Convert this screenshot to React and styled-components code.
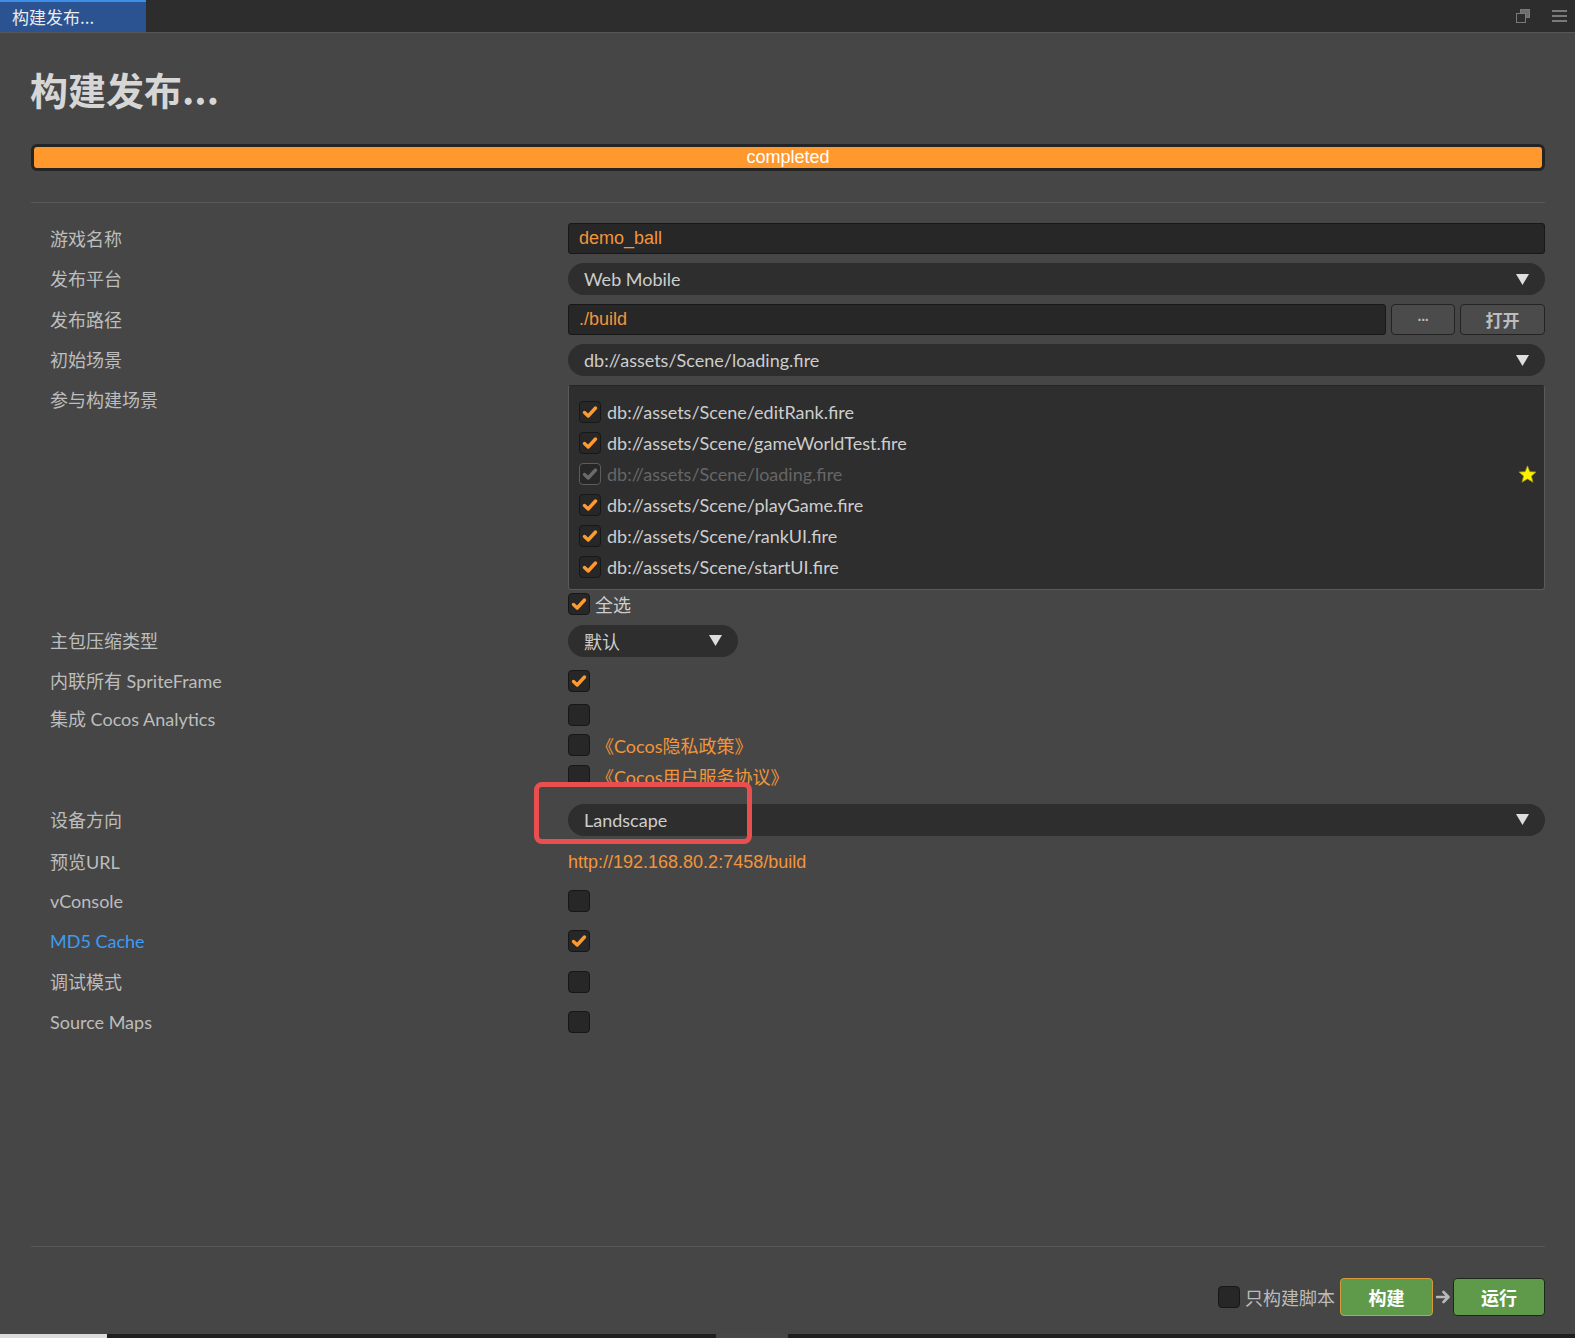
import React from 'react'
import styled, { createGlobalStyle } from 'styled-components'

const colors = {
  page: '#464646',
  tabBar: '#2d2d2d',
  tab: '#2b5291',
  tabLine: '#3c8ee8',
  line: '#595959',
  label: '#bdbdbd',
  value: '#cdcdcd',
  orange: '#f2953a',
  field: '#272727',
  pill: '#2e2e2e',
  blue: '#3d9cf2',
  green: '#5f9a4b',
}

const GlobalStyle = createGlobalStyle`
  html, body {
    margin: 0;
    padding: 0;
    background: ${colors.page};
  }
  body {
    font-family: Lato, "Noto Sans CJK SC", sans-serif;
  }
`

const Window = styled.div`
  position: relative;
  width: 1575px;
  height: 1338px;
  display: flex;
  flex-direction: column;
  overflow: hidden;
  background: ${colors.page};
`

const TabBar = styled.div`
  height: 32px;
  flex-shrink: 0;
  display: flex;
  justify-content: space-between;
  background: ${colors.tabBar};
  border-bottom: 1px solid #575757;
`

const Tab = styled.div`
  width: 146px;
  box-sizing: border-box;
  padding-left: 12px;
  background: ${colors.tab};
  border-top: 2px solid ${colors.tabLine};
  color: #ececec;
  font-family: "Noto Sans CJK SC", sans-serif;
  font-size: 17px;
  line-height: 29px;
`

const TabTools = styled.div`
  display: flex;
  align-items: center;
  gap: 22px;
  padding-right: 8px;
`

const Main = styled.div`
  flex: 1;
  display: flex;
  flex-direction: column;
  padding: 0 30px 0 31px;
`

const Title = styled.h1`
  margin: 34px 0 0 -1px;
  font-family: "Noto Sans CJK SC", sans-serif;
  font-size: 38px;
  font-weight: 700;
  line-height: 44px;
  color: #d6d6d6;
`

const Progress = styled.div`
  margin-top: 33px;
  height: 27px;
  box-sizing: border-box;
  border: 3px solid #242424;
  border-radius: 6px;
  background: #ff982d;
  color: #ffffff;
  font-family: "Liberation Sans", Arial, sans-serif;
  font-size: 18px;
  line-height: 21px;
  text-align: center;
`

const Divider = styled.div`
  height: 1px;
  background: ${colors.line};
  margin-top: ${({ $mt }) => $mt || 0}px;
`

const Form = styled.div`
  margin-top: 15px;
  display: flex;
  flex-direction: column;
`

const Row = styled.div`
  display: grid;
  grid-template-columns: 537px 1fr;
  align-items: ${({ $top }) => ($top ? 'start' : 'center')};
  height: ${({ $h }) => $h}px;
  margin-top: ${({ $mt }) => $mt || 0}px;
`

const Label = styled.div`
  padding-left: 19px;
  padding-top: ${({ $dy }) => $dy || 0}px;
  font-size: 18px;
  line-height: 26px;
  color: ${({ $color }) => $color || colors.label};
`

const TextField = styled.div`
  flex: 1;
  height: 31px;
  box-sizing: border-box;
  padding: 0 10px;
  background: ${colors.field};
  border: 1px solid #181818;
  border-radius: 3px;
  color: ${colors.orange};
  font-family: "Liberation Sans", Arial, sans-serif;
  font-size: 18px;
  line-height: 29px;
`

const Select = styled.div`
  width: ${({ $w }) => ($w ? `${$w}px` : 'auto')};
  height: 32px;
  box-sizing: border-box;
  display: flex;
  align-items: center;
  justify-content: space-between;
  padding: 0 16px 0 16px;
  background: ${colors.pill};
  border-radius: 16px;
  color: ${colors.value};
  font-size: 18px;
`

const PathLine = styled.div`
  display: flex;
  gap: 5px;
`

const SmallButton = styled.div`
  width: ${({ $w }) => $w}px;
  height: 31px;
  box-sizing: border-box;
  display: flex;
  align-items: center;
  justify-content: center;
  background: #4b4b4b;
  border: 1px solid #232323;
  border-radius: 4px;
  color: #bdbdbd;
  font-family: "Noto Sans CJK SC", sans-serif;
  font-size: 17px;
  font-weight: 700;
`

const Dots = styled.span`
  font-family: "Liberation Sans", Arial, sans-serif;
  font-size: 14px;
  font-weight: 700;
  letter-spacing: -1px;
`

const SceneList = styled.div`
  height: 205px;
  box-sizing: border-box;
  padding: 10px 7px 9px 10px;
  background: ${colors.pill};
  border: 1px solid #5a5a5a;
  border-top-color: #252525;
  border-radius: 3px;
`

const SceneItem = styled.div`
  height: 31px;
  display: flex;
  align-items: center;
  gap: 6px;
  font-size: 18px;
  color: ${({ $disabled }) => ($disabled ? '#666666' : colors.value)};
`

const Grow = styled.div`
  flex: 1;
`

const CheckLine = styled.div`
  display: flex;
  align-items: center;
  gap: ${({ $gap }) => $gap ?? 5}px;
  font-size: 18px;
  color: ${({ $color }) => $color || colors.value};
`

const Box = styled.span`
  width: 22px;
  height: 22px;
  flex-shrink: 0;
  box-sizing: border-box;
  display: flex;
  align-items: center;
  justify-content: center;
  background: #272727;
  border: 1px solid ${({ $disabled }) => ($disabled ? '#5c5c5c' : '#171717')};
  border-radius: 4px;
`

const LinkText = styled.span`
  color: ${colors.orange};
  font-family: ${({ $mono }) => ($mono ? '"Liberation Sans", Arial, sans-serif' : 'inherit')};
  font-size: 18px;
`

const Footer = styled.div`
  margin-top: auto;
  height: 88px;
  box-sizing: border-box;
  padding-top: 12px;
  border-top: 1px solid ${colors.line};
  display: flex;
  align-items: center;
  justify-content: flex-end;
`

const FooterCheck = styled(CheckLine)`
  margin-right: 5px;
  color: #bbbbbb;
`

const GreenButton = styled.div`
  width: ${({ $w }) => $w}px;
  height: 38px;
  box-sizing: border-box;
  display: flex;
  align-items: center;
  justify-content: center;
  background: ${colors.green};
  border: 1px solid ${({ $border }) => $border};
  border-radius: 4px;
  color: #ffffff;
  font-family: "Noto Sans CJK SC", sans-serif;
  font-size: 18px;
  font-weight: 700;
`

const ArrowWrap = styled.div`
  width: 20px;
  display: flex;
  justify-content: center;
`

const StatusBar = styled.div`
  height: 4px;
  flex-shrink: 0;
  display: flex;
  background: #1f1f1f;
`

const StatusSegment = styled.div`
  width: ${({ $w }) => $w}px;
  margin-left: ${({ $ml }) => $ml || 0}px;
  background: ${({ $color }) => $color};
`

const Annotation = styled.div`
  position: absolute;
  left: 534px;
  top: 782px;
  width: 218px;
  height: 62px;
  box-sizing: border-box;
  border: 5px solid #e84f4e;
  border-radius: 8px;
  pointer-events: none;
`

function Check({ checked, disabled }) {
  return (
    <Box $disabled={disabled}>
      {checked && (
        <svg width="16" height="14" viewBox="0 0 16 14">
          <polyline
            points="2.5,7.5 6.2,11 13.5,3"
            fill="none"
            stroke={disabled ? '#6a6a6a' : '#ff9a2e'}
            strokeWidth="3.4"
            strokeLinecap="round"
            strokeLinejoin="round"
          />
        </svg>
      )}
    </Box>
  )
}

function Caret() {
  return (
    <svg width="13" height="11" viewBox="0 0 13 11">
      <polygon points="0,0 13,0 6.5,11" fill="#dedede" />
    </svg>
  )
}

function Star() {
  return (
    <svg width="19" height="18" viewBox="0 0 24 23">
      <polygon
        points="12,1 15,8.5 23,9 17,14.2 19,22 12,17.8 5,22 7,14.2 1,9 9,8.5"
        fill="#fff200"
        stroke="#9c9400"
        strokeWidth="1"
        strokeLinejoin="round"
      />
    </svg>
  )
}

const scenes = [
  { path: 'db://assets/Scene/editRank.fire' },
  { path: 'db://assets/Scene/gameWorldTest.fire' },
  { path: 'db://assets/Scene/loading.fire', start: true },
  { path: 'db://assets/Scene/playGame.fire' },
  { path: 'db://assets/Scene/rankUI.fire' },
  { path: 'db://assets/Scene/startUI.fire' },
]

export default function App() {
  return (
    <Window>
      <GlobalStyle />
      <TabBar>
        <Tab>构建发布...</Tab>
        <TabTools>
          <svg width="14" height="14" viewBox="0 0 14 14">
            <rect x="4.5" y="0.5" width="9" height="8" fill="#6e6e6e" stroke="#7a7a7a" />
            <rect x="0.5" y="4.5" width="9" height="9" fill="#2d2d2d" stroke="#7a7a7a" />
          </svg>
          <svg width="15" height="12" viewBox="0 0 15 12">
            <rect x="0" y="0" width="15" height="2" fill="#7a7a7a" />
            <rect x="0" y="5" width="15" height="2" fill="#7a7a7a" />
            <rect x="0" y="10" width="15" height="2" fill="#7a7a7a" />
          </svg>
        </TabTools>
      </TabBar>

      <Main>
        <Title>构建发布...</Title>
        <Progress>completed</Progress>
        <Divider $mt={31} />

        <Form>
          <Row $h={41}>
            <Label>游戏名称</Label>
            <TextField>demo_ball</TextField>
          </Row>
          <Row $h={40}>
            <Label>发布平台</Label>
            <Select>
              Web Mobile
              <Caret />
            </Select>
          </Row>
          <Row $h={41}>
            <Label>发布路径</Label>
            <PathLine>
              <TextField>./build</TextField>
              <SmallButton $w={64}>
                <Dots>···</Dots>
              </SmallButton>
              <SmallButton $w={85}>打开</SmallButton>
            </PathLine>
          </Row>
          <Row $h={40}>
            <Label>初始场景</Label>
            <Select>
              db://assets/Scene/loading.fire
              <Caret />
            </Select>
          </Row>
          <Row $h={205} $mt={5} $top>
            <Label $dy={2}>参与构建场景</Label>
            <SceneList>
              {scenes.map((s) => (
                <SceneItem key={s.path} $disabled={s.start}>
                  <Check checked disabled={s.start} />
                  {s.path}
                  {s.start && (
                    <>
                      <Grow />
                      <Star />
                    </>
                  )}
                </SceneItem>
              ))}
            </SceneList>
          </Row>
          <Row $h={27}>
            <div />
            <CheckLine $gap={5}>
              <Check checked />
              全选
            </CheckLine>
          </Row>
          <Row $h={47}>
            <Label>主包压缩类型</Label>
            <Select $w={170}>
              默认
              <Caret />
            </Select>
          </Row>
          <Row $h={33}>
            <Label>内联所有 SpriteFrame</Label>
            <CheckLine>
              <Check checked />
            </CheckLine>
          </Row>
          <Row $h={33}>
            <Label $dy={9}>集成 Cocos Analytics</Label>
            <CheckLine>
              <Check />
            </CheckLine>
          </Row>
          <Row $h={29}>
            <div />
            <CheckLine $gap={6}>
              <Check />
              <LinkText>《Cocos隐私政策》</LinkText>
            </CheckLine>
          </Row>
          <Row $h={33}>
            <div />
            <CheckLine $gap={6}>
              <Check />
              <LinkText>《Cocos用户服务协议》</LinkText>
            </CheckLine>
          </Row>
          <Row $h={47} $mt={4}>
            <Label>设备方向</Label>
            <Select>
              Landscape
              <Caret />
            </Select>
          </Row>
          <Row $h={38}>
            <Label>预览URL</Label>
            <LinkText $mono>http://192.168.80.2:7458/build</LinkText>
          </Row>
          <Row $h={40}>
            <Label>vConsole</Label>
            <CheckLine>
              <Check />
            </CheckLine>
          </Row>
          <Row $h={40}>
            <Label $color={colors.blue}>MD5 Cache</Label>
            <CheckLine>
              <Check checked />
            </CheckLine>
          </Row>
          <Row $h={41}>
            <Label>调试模式</Label>
            <CheckLine>
              <Check />
            </CheckLine>
          </Row>
          <Row $h={40}>
            <Label>Source Maps</Label>
            <CheckLine>
              <Check />
            </CheckLine>
          </Row>
        </Form>

        <Footer>
          <FooterCheck $gap={5}>
            <Check />
            只构建脚本
          </FooterCheck>
          <GreenButton $w={93} $border="#d69a3d">构建</GreenButton>
          <ArrowWrap>
            <svg width="15" height="14" viewBox="0 0 15 14">
              <path
                d="M1 7 H12 M7.5 2 L12.5 7 L7.5 12"
                fill="none"
                stroke="#b8b8b8"
                strokeWidth="2.6"
                strokeLinecap="round"
                strokeLinejoin="round"
              />
            </svg>
          </ArrowWrap>
          <GreenButton $w={92} $border="#1d2819">运行</GreenButton>
        </Footer>
      </Main>

      <StatusBar>
        <StatusSegment $w={107} $color="#dcdcdc" />
        <StatusSegment $w={72} $ml={609} $color="#474747" />
      </StatusBar>

      <Annotation />
    </Window>
  )
}
